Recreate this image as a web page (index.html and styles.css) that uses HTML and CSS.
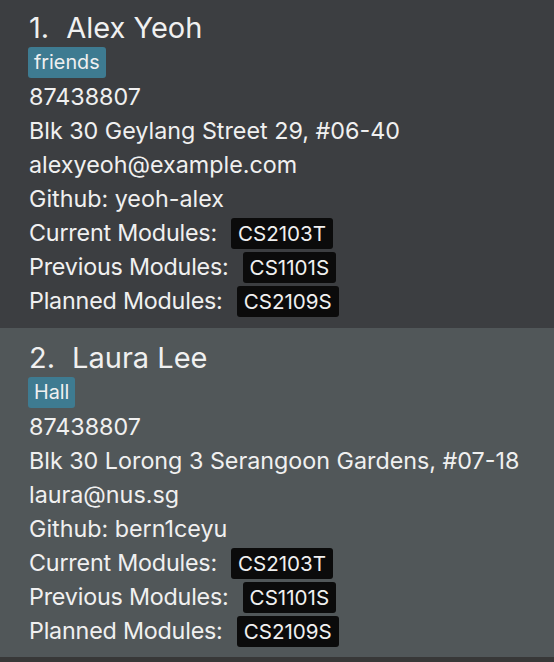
FILE: index.html
```html
<!DOCTYPE html>
<html>
<head>
<meta charset="utf-8">
<link rel="stylesheet" href="styles.css">
</head>
<body>
<div class="list">
  <div class="card card-odd">
    <div class="name"><span class="idx">1.</span>Alex Yeoh</div>
    <div class="tags"><span class="tag">friends</span></div>
    <div class="line">87438807</div>
    <div class="line">Blk 30 Geylang Street 29, #06-40</div>
    <div class="line">alexyeoh@example.com</div>
    <div class="line">Github: yeoh-alex</div>
    <div class="line mod"><span class="lbl">Current Modules:</span><span class="badge">CS2103T</span></div>
    <div class="line mod"><span class="lbl">Previous Modules:</span><span class="badge">CS1101S</span></div>
    <div class="line mod"><span class="lbl">Planned Modules:</span><span class="badge">CS2109S</span></div>
  </div>
  <div class="card card-even">
    <div class="name"><span class="idx">2.</span>Laura Lee</div>
    <div class="tags"><span class="tag">Hall</span></div>
    <div class="line">87438807</div>
    <div class="line">Blk 30 Lorong 3 Serangoon Gardens, #07-18</div>
    <div class="line">laura@nus.sg</div>
    <div class="line">Github: bern1ceyu</div>
    <div class="line mod"><span class="lbl">Current Modules:</span><span class="badge">CS2103T</span></div>
    <div class="line mod"><span class="lbl">Previous Modules:</span><span class="badge">CS1101S</span></div>
    <div class="line mod"><span class="lbl">Planned Modules:</span><span class="badge">CS2109S</span></div>
  </div>
</div>
</body>
</html>
```
FILE: styles.css
```css
html, body {
  margin: 0;
  padding: 0;
  background: #383838;
  font-family: Inter, "Open Sans", sans-serif;
  color: #f0f0f0;
}
.list {
  display: flex;
  flex-direction: column;
}
.card {
  box-sizing: border-box;
  padding: 11px 10px 0 29px;
}
.card-odd { background: #3c3e41; height: 328px; }
.card-even { background: #515759; height: 329px; padding-top: 13px; }
.name {
  font-size: 29px;
  line-height: 34px;
  height: 34px;
}
.idx { margin-right: 17px; }
.tags {
  height: 35px;
  display: flex;
  align-items: center;
}
.tag {
  background: #3e7b91;
  border-radius: 3px;
  font-size: 19.8px;
  line-height: 31px;
  padding: 0 6px;
  margin-left: -1px;
}
.line {
  font-size: 23.3px;
  line-height: 34px;
  height: 34px;
  white-space: nowrap;
}
.mod {
  display: flex;
  align-items: center;
}
.lbl { margin-right: 14px; letter-spacing: -0.2px; }
.badge {
  background: #0b0b0b;
  border-radius: 3px;
  line-height: 31px;
  padding: 0 7px;
  font-size: 20.6px;
}
```
